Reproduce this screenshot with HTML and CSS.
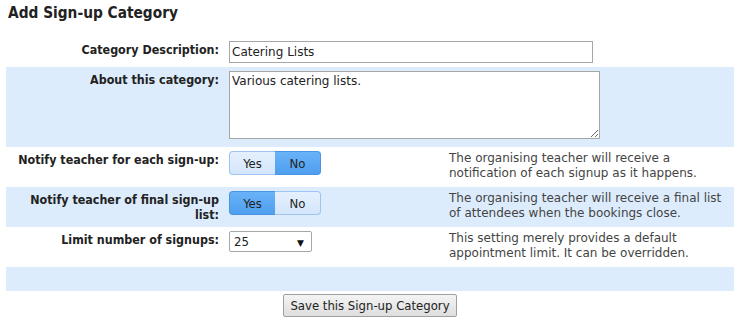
FILE: index.html
```html
<!DOCTYPE html>
<html lang="en">
<head>
    <meta charset="UTF-8">
    <title>Add Sign-up Category</title>
    <link rel="stylesheet" href="styles.css">
</head>
<body>
    <h2 class="title">Add Sign-up Category</h2>

    <form class="category-form">
        <table class="form-table">
            <colgroup>
                <col class="col-label">
                <col class="col-field">
                <col class="col-help">
            </colgroup>
            <tr>
                <th class="label-cell"><label for="desc">Category Description:</label></th>
                <td class="field-cell" colspan="2">
                    <input type="text" id="desc" class="text-input" value="Catering Lists">
                </td>
            </tr>
            <tr class="alt">
                <th class="label-cell"><label for="about">About this category:</label></th>
                <td class="field-cell" colspan="2">
                    <textarea id="about" class="text-area">Various catering lists.</textarea>
                </td>
            </tr>
            <tr>
                <th class="label-cell">Notify teacher for each sign-up:</th>
                <td class="field-cell">
                    <div class="toggle">
                        <button type="button" class="toggle-btn">Yes</button>
                        <button type="button" class="toggle-btn active">No</button>
                    </div>
                </td>
                <td class="help-cell">The organising teacher will receive a notification of each signup as it happens.</td>
            </tr>
            <tr class="alt">
                <th class="label-cell">Notify teacher of final sign-up list:</th>
                <td class="field-cell">
                    <div class="toggle">
                        <button type="button" class="toggle-btn active">Yes</button>
                        <button type="button" class="toggle-btn">No</button>
                    </div>
                </td>
                <td class="help-cell">The organising teacher will receive a final list of attendees when the bookings close.</td>
            </tr>
            <tr>
                <th class="label-cell"><label for="limit">Limit number of signups:</label></th>
                <td class="field-cell">
                    <div class="select-box">
                        <select id="limit">
                            <option>25</option>
                        </select>
                        <span class="select-arrow">&#9660;</span>
                    </div>
                </td>
                <td class="help-cell">This setting merely provides a default appointment limit. It can be overridden.</td>
            </tr>
            <tr class="alt empty">
                <td colspan="3"></td>
            </tr>
        </table>

        <div class="actions">
            <button type="submit" class="save-btn">Save this Sign-up Category</button>
        </div>
    </form>
</body>
</html>
```

FILE: styles.css
```css
body {
    margin: 0;
    padding: 0 8px 0 6px;
    font-family: 'DejaVu Sans', Verdana, sans-serif;
    font-size: 12px;
    color: #333;
    background: #fff;
}

.title {
    margin: 0;
    padding: 4px 0 0 2px;
    height: 37px;
    box-sizing: border-box;
    font-size: 15.3px;
    font-stretch: condensed;
    font-weight: bold;
    color: #222;
}

.form-table {
    width: 728px;
    border-collapse: collapse;
    table-layout: fixed;
}

.col-label {
    width: 218px;
}

.col-field {
    width: 220px;
}

.form-table th,
.form-table td {
    padding: 4px 5px;
    vertical-align: top;
    line-height: 15px;
}

.alt {
    background: #ddecfd;
}

.label-cell {
    text-align: right;
    font-size: 12.4px;
    font-stretch: condensed;
    font-weight: bold;
    color: #222;
    padding-top: 5px !important;
}

.help-cell {
    color: #444;
    padding-bottom: 6px !important;
}

.text-input {
    display: block;
    width: 364px;
    height: 22px;
    box-sizing: border-box;
    border: 1px solid #a6a6a6;
    padding: 1px 2px;
    font: inherit;
    color: #222;
}

.text-area {
    display: block;
    width: 371px;
    height: 68px;
    box-sizing: border-box;
    margin-bottom: 4px;
    border: 1px solid #a6a6a6;
    padding: 2px 2px;
    font: inherit;
    color: #222;
}

.toggle {
    display: flex;
    width: 92px;
}

.toggle-btn {
    flex: 1;
    height: 24px;
    padding: 0;
    font: inherit;
    font-size: 13px;
    font-stretch: condensed;
    color: #222;
    background: linear-gradient(#e5f0fd, #d4e6fb);
    border: 1px solid #9dc5ef;
    cursor: pointer;
}

.toggle-btn:first-child {
    border-radius: 4px 0 0 4px;
    border-right: none;
}

.toggle-btn:last-child {
    border-radius: 0 4px 4px 0;
    border-left: none;
}

.toggle-btn.active {
    background: linear-gradient(#69b2f7, #4f9ff0);
    border-color: #4a95e3;
}

.select-box {
    position: relative;
    width: 83px;
}

.select-box select {
    display: block;
    width: 83px;
    height: 21px;
    border: 1px solid #a6a6a6;
    border-radius: 2px;
    background: #fff;
    padding: 0 4px;
    font: inherit;
    font-size: 13px;
    font-stretch: condensed;
    color: #222;
    appearance: none;
}

.select-arrow {
    position: absolute;
    right: 8px;
    top: 5px;
    font-size: 9px;
    color: #111;
    pointer-events: none;
}

.empty td {
    height: 24px;
    padding: 0;
}

.actions {
    display: flex;
    justify-content: center;
    width: 728px;
    padding-top: 3px;
}

.save-btn {
    height: 23px;
    padding: 0 6px;
    font: inherit;
    font-size: 13px;
    font-stretch: condensed;
    color: #222;
    background: linear-gradient(#f4f4f4, #dedede);
    border: 1px solid #a0a0a0;
    border-radius: 2px;
}
```
